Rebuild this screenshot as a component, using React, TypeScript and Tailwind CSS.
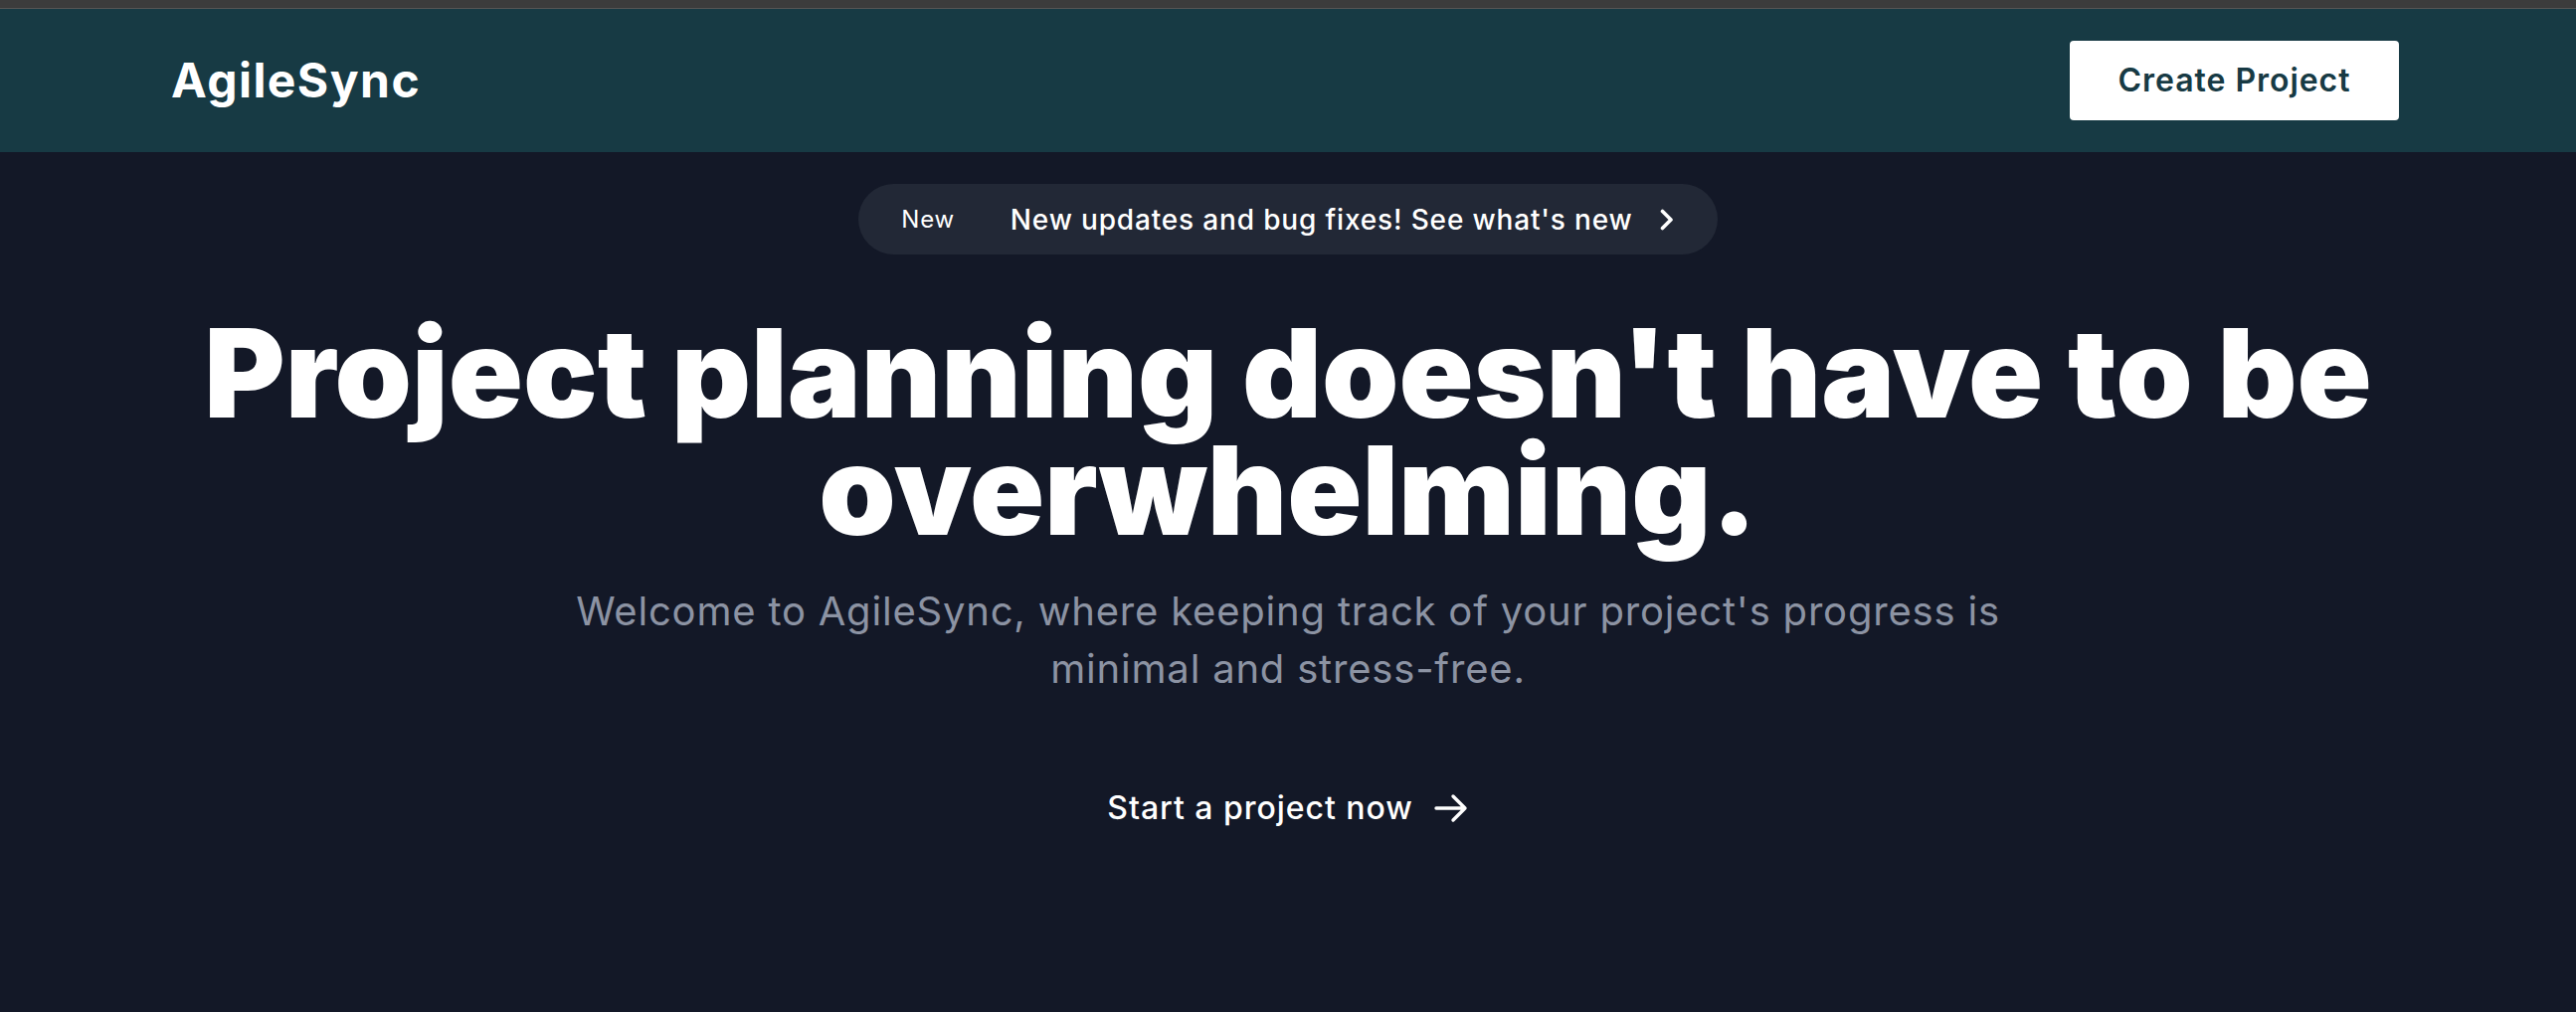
export default function App() {
  return (
    <div className="min-h-screen bg-[#131827] font-['Inter',sans-serif] text-white">
      <div className="h-[9px] bg-[#3c3c3c] border-b border-[#555]" />

      <header className="bg-[#173a44]">
        <div className="flex h-[144px] items-center justify-between pl-[172px] pr-[178px]">
          <a href="#" className="text-[48px] font-bold tracking-[0.03em] text-white">
            AgileSync
          </a>
          <button className="h-[80px] w-[331px] rounded-[4px] bg-white text-[32px] font-semibold tracking-[0.03em] text-[#173a44]">
            Create Project
          </button>
        </div>
      </header>

      <main className="flex flex-col items-center px-[150px]">
        <a
          href="#"
          className="mt-[32px] flex h-[71px] items-center rounded-full bg-[#222836] pl-[43px] pr-[44px]"
        >
          <span className="text-[24px] tracking-[0.03em] text-white">New</span>
          <span className="ml-[56px] text-[28px] font-medium tracking-[0.03em] text-white">
            New updates and bug fixes! See what's new
          </span>
          <svg className="ml-[27px] h-[22px] w-[14px]" viewBox="0 0 14 22" fill="none">
            <path d="M2.5 2.5 11 11l-8.5 8.5" stroke="currentColor" strokeWidth="3.6" strokeLinecap="round" strokeLinejoin="round" />
          </svg>
        </a>

        <h1 className="mt-[60px] text-center text-[124px] font-black leading-[118px]">
          Project planning doesn't have to be overwhelming.
        </h1>

        <p className="mt-[34px] max-w-[1500px] text-center text-[40px] leading-[58px] tracking-[0.02em] text-[#8c93a3]">
          Welcome to AgileSync, where keeping track of your project's progress is minimal and stress-free.
        </p>

        <a href="#" className="mt-[87px] flex items-center text-[32px] font-medium tracking-[0.03em] text-white">
          Start a project now
          <svg className="ml-[20px] h-[30px] w-[36px]" viewBox="0 0 36 30" fill="none">
            <path d="M3 15h29M20 3l12 12-12 12" stroke="currentColor" strokeWidth="3.4" strokeLinecap="round" strokeLinejoin="round" />
          </svg>
        </a>
      </main>
    </div>
  )
}
